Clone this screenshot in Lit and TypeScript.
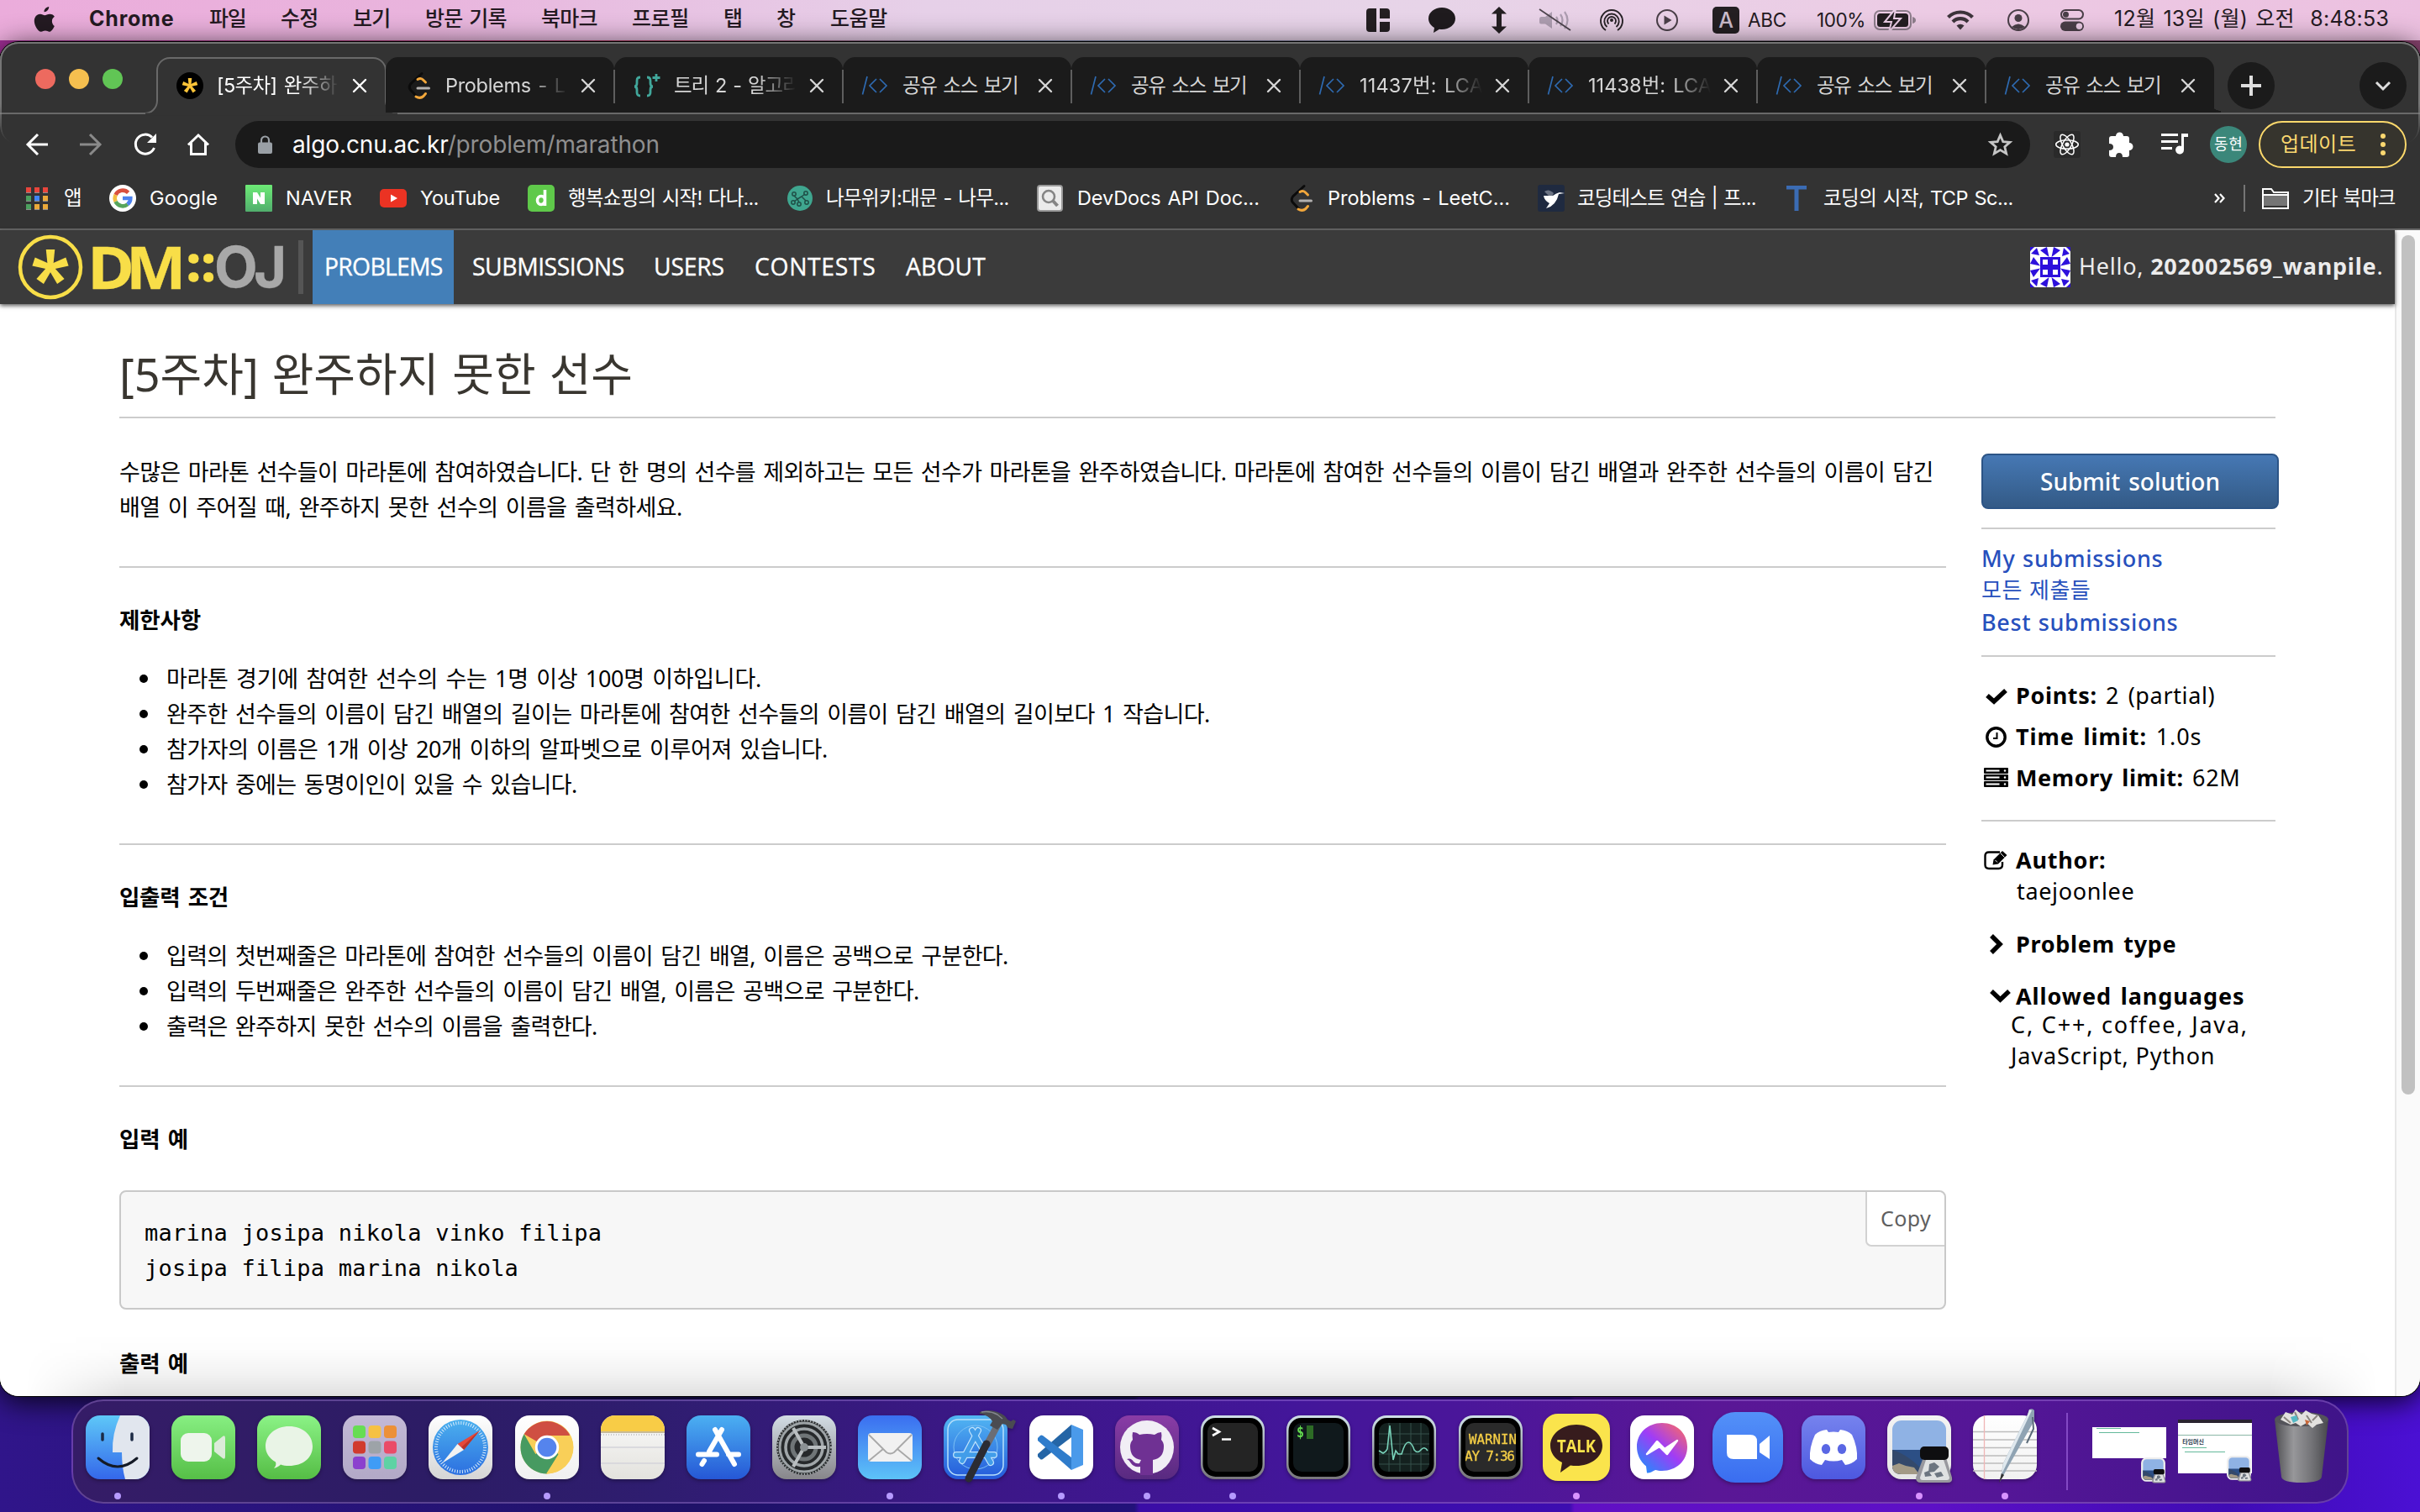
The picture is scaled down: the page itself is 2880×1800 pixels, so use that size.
import { LitElement, html, css, svg, TemplateResult } from "lit";
import { customElement, property } from "lit/decorators.js";
import { styleMap } from "lit/directives/style-map.js";

/* One line of text, tracked so that it fills the given width. */
@customElement("fit-line")
class FitLine extends LitElement {
  @property({ type: Number }) w = 0;
  static styles = css`
    :host { display: inline-block; white-space: pre; flex: none; }
  `;
  render() {
    return html`<slot></slot>`;
  }
  updated() {
    const n = (this.textContent || "").length;
    this.style.letterSpacing = "0px";
    const range = document.createRange();
    range.selectNodeContents(this);
    const natural = range.getBoundingClientRect().width;
    if (n > 1 && this.w) {
      this.style.letterSpacing = `${((this.w - natural) / (n - 0.5)).toFixed(3)}px`;
      this.style.width = `${this.w}px`;
    }
  }
}

interface Item { x: number; el: TemplateResult; }

/* Lays items in a row; each cell reaches to the start of the next one. */
const row = (items: Item[], from: number) => html`
  <div class="lead" style=${styleMap({ width: `${items[0].x - from}px` })}></div>
  ${items.map((it, i) => html`<div class="cell" style=${styleMap(
    i + 1 < items.length ? { width: `${items[i + 1].x - it.x}px` } : {}
  )}>${it.el}</div>`)}
`;
const rowCss = css`
  .lead, .cell { flex: none; }
  .cell { display: flex; align-items: center; }
  svg { display: block; flex: none; overflow: visible; }
`;

const line = (w: number, t: string, c = "") => html`<fit-line class=${c} .w=${w}>${t}</fit-line>`;

/* ---------- menu bar ---------- */
const menuIcons = {
  apple: html`<svg width="28" height="32" viewBox="0 0 28 32" fill="#241a22"><path d="M19.2 0c.3 3-2.600 6.300-5.700 6.200C13.200 3.300 16.200.2 19.200 0zM25.800 22.900c-1 2.400-3.400 6.800-6 6.900-1.900 0-2.600-1.200-4.900-1.200s-3.100 1.200-4.900 1.200C6.200 30 1.800 22.500 1.800 17.100c0-5.600 3.700-8.300 6.900-8.300 2.300 0 4.200 1.500 5.600 1.500 1.300 0 3.600-1.700 6.500-1.500 1.200.1 3.600.5 5.100 2.900-4.300 2.600-3.600 8.900-.1 11.200z"/></svg>`,
  split: html`<svg width="28" height="28" viewBox="0 0 28 28" fill="#241f22"><path d="M4 0h8v28H4a4 4 0 0 1-4-4V4a4 4 0 0 1 4-4zM16 0h8a4 4 0 0 1 4 4v8H16zM16 16h12v8a4 4 0 0 1-4 4h-8z"/></svg>`,
  bubble: html`<svg width="32" height="32" viewBox="0 0 32 32" fill="#1f1b1e"><path d="M16 1c8.800 0 16 5.600 16 13s-7 13-16 13c-1 0-2 0-3-.2L6 31l1-6C2.500 22.500 0 18.500 0 14 0 6.600 7.200 1 16 1z"/></svg>`,
  arrows: html`<svg width="18" height="32" viewBox="0 0 18 32" fill="#241f22"><path d="M9 0l9 8.500h-6v15h6L9 32l-9-8.500h6v-15H0z"/></svg>`,
  mute: html`<svg width="38" height="28" viewBox="0 0 38 28" fill="none"><path d="M2 10h5l8-6v20l-8-5.500H2q-2 0-2-2v-4q0-2.500 2-2.500z" fill="#ad9db0"/><path d="M20 10q3 4 0 9M25 7q5 7 0 14M30 4q7 10 0 20" stroke="#ad9db0" stroke-width="2.200"/><path d="M0 1l37 25" stroke="#4d444d" stroke-width="1.800"/></svg>`,
  airdrop: html`<svg width="28" height="28" viewBox="0 0 28 28" fill="none" stroke="#282327" stroke-width="1.900"><circle cx="14" cy="14" r="2" fill="#282327" stroke="none"/><path d="M10.500 18.500a5 5 0 1 1 7 0M8.500 22a8.700 8.700 0 1 1 11 0M7 26a13 13 0 1 1 14 0"/></svg>`,
  play: html`<svg width="26" height="26" viewBox="0 0 26 26"><circle cx="13" cy="13" r="12" fill="none" stroke="#4a3f48" stroke-width="2"/><path d="M9.500 7.500l9 5.500-9 5.500z" fill="#4a3f48"/></svg>`,
  battery: html`<svg width="50" height="24" viewBox="0 0 50 24"><rect x="1" y="1" width="43" height="22" rx="6" fill="none" stroke="#8d7d8b" stroke-width="2"/><rect x="4" y="4" width="37" height="16" rx="3.500" fill="#241f22"/><path d="M46 8q4 1 4 4t-4 4z" fill="#8d7d8b"/><path d="M26 -2L13 14h8l-3 12 14-16h-8z" fill="#241f22" stroke="#eacde5" stroke-width="2"/></svg>`,
  wifi: html`<svg width="32" height="24" viewBox="0 0 32 24" fill="none" stroke="#3d343b" stroke-width="4.200"><path d="M1.500 8.500a20.500 20.500 0 0 1 29 0M7 14a12.500 12.500 0 0 1 18 0"/><path d="M11.500 18.500a6.500 6.500 0 0 1 9 0L16 23.500z" fill="#3d343b" stroke="none"/></svg>`,
  user: html`<svg width="26" height="26" viewBox="0 0 26 26"><circle cx="13" cy="13" r="12" fill="none" stroke="#4a3f48" stroke-width="2"/><circle cx="13" cy="10.500" r="4.500" fill="#4a3f48"/><path d="M5 21q8-7 16 0-8 6-16 0z" fill="#4a3f48"/></svg>`,
  toggle: html`<svg width="28" height="26" viewBox="0 0 28 26"><rect x="1" y="1" width="26" height="10.500" rx="5.200" fill="none" stroke="#4a3f48" stroke-width="2"/><circle cx="6.500" cy="6.200" r="3.500" fill="#4a3f48"/><rect y="14.500" width="28" height="11.500" rx="5.700" fill="#4a3f48"/><circle cx="22.500" cy="20.200" r="3.700" fill="#eacbe4"/></svg>`,
};

@customElement("menu-bar")
class MenuBar extends LitElement {
  static styles = [rowCss, css`
    :host {
      display: flex; height: 48px; align-items: center; color: #241a22; word-spacing: 2px;
      font: 500 25px/45px Inter, "Noto Sans CJK KR", sans-serif;
      background: linear-gradient(90deg, #ebacdb 0, #e9b4dd 500px, #e6d0e8 1100px, #e7d4e8 1700px, #eccbe4 2300px, #ecc0e0 100%);
    }
    .cell { height: 48px; }
    fit-line { height: 48px; }
    .b { font-weight: 700; }
    .r { font-weight: 400; word-spacing: 2px; }
    .small { font-size: 22.500px; font-weight: 400; line-height: 48px; }
    .abc { width: 32px; height: 32px; border-radius: 5px; background: #241f22; color: #cbbccb; font: 500 25px/32px Inter, sans-serif; text-align: center; }
  `];
  render() {
    const m = menuIcons;
    return row([
      { x: 39, el: m.apple },
      { x: 106, el: line(101, "Chrome", "b") },
      { x: 249, el: line(44, "파일") },
      { x: 334, el: line(45, "수정") },
      { x: 420, el: line(45, "보기") },
      { x: 506, el: line(97, "방문 기록") },
      { x: 644, el: line(67, "북마크") },
      { x: 752, el: line(68, "프로필") },
      { x: 861, el: line(22, "탭") },
      { x: 924, el: line(22, "창") },
      { x: 988, el: line(68, "도움말") },
      { x: 1626, el: m.split },
      { x: 1700, el: m.bubble },
      { x: 1775, el: m.arrows },
      { x: 1832, el: m.mute },
      { x: 1904, el: m.airdrop },
      { x: 1971, el: m.play },
      { x: 2038, el: html`<div class="abc">A</div>` },
      { x: 2080, el: line(46, "ABC", "small") },
      { x: 2162, el: line(58, "100%", "small") },
      { x: 2230, el: m.battery },
      { x: 2317, el: m.wifi },
      { x: 2389, el: m.user },
      { x: 2452, el: m.toggle },
      { x: 2516, el: line(327, "12월 13일 (월) 오전  8:48:53", "r") },
    ], 0);
  }
}

/* ---------- tabs ---------- */
/* Five-armed asterisk; the arms widen towards their tips. */
const asterisk = (color: string, r: number) => svg`<g fill=${color}>
  ${[0, 72, 144, 216, 288].map((a) => svg`<path d=${`M${-r * 0.15} 0L${-r * 0.25} ${-r}H${r * 0.25}L${r * 0.15} 0Z`} transform=${`rotate(${a})`}/>`)}</g>`;

const leet = html`<svg width="26" height="32" viewBox="0 0 26 32" fill="none" stroke-linecap="round"><path d="M16 1.500L2.500 14q-2.500 4 0 7l7.500 8" stroke="#0b0b0b" stroke-width="3"/><path d="M11 8.500q4-2.500 7 1l2.500 2.500M9 29q5 3 9-.5l2.500-3" stroke="#f2a73b" stroke-width="3"/><path d="M11 19h13.500" stroke="#b3b1b0" stroke-width="3"/></svg>`;
const code = html`<svg width="30" height="22" viewBox="0 0 30 22" fill="none" stroke="#2e6ab1" stroke-width="1.700"><path d="M6 0L.5 21.500M17 3l-8 8 8 8M21 3l8 8-8 8"/></svg>`;
const favicons: Record<string, TemplateResult> = {
  dmoj: html`<svg width="32" height="32" viewBox="-16 -16 32 32"><circle r="16" fill="#000"/>${asterisk("#fcc438", 9)}</svg>`,
  leet: html`<svg width="4" height="1"></svg>${leet}`,
  tree: html`<svg width="32" height="32" viewBox="0 0 32 32" fill="none" stroke="#41a79b" stroke-width="2.800"><path d="M8 6Q4 6 4 10v3q0 4-3 4 3 0 3 4v3q0 4 4 4M16 6q4 0 4 4v3q0 4 3 4-3 0-3 4v3q0 4-4 4M27 2v9M22.500 6.500h9"/></svg>`,
  code,
};
const cross = html`<svg class="x" width="16" height="16" viewBox="0 0 16 16" fill="none" stroke="currentColor" stroke-width="2.400" stroke-linecap="round"><path d="M1 1l14 14M15 1L1 15"/></svg>`;

@customElement("tab-strip")
class TabStrip extends LitElement {
  static styles = css`
    :host { display: flex; height: 84px; border-bottom: 2px solid #696969; background: #333; color: #d6d6d6; font: 400 23.500px/32px Inter, "Noto Sans CJK KR", sans-serif; box-sizing: content-box; word-spacing: 2.500px; }
    svg { display: block; flex: none; overflow: visible; }
    .lights { display: flex; gap: 16px; width: 145px; padding: 32px 0 0 42px; flex: none; }
    .light { width: 24px; height: 24px; border-radius: 50%; flex: none; }
    .tab { position: relative; display: flex; align-items: center; width: 272px; height: 66px; margin-top: 18px; box-sizing: border-box; padding: 2px 0 0 23px; flex: none; background: #1b1b1b; border-radius: 15px 15px 0 0; }
    .tab.active { background: none; color: #fff; }
    .tab.line::before { content: ""; position: absolute; left: -1px; top: 15px; width: 2px; height: 40px; background: #5e5e5e; }
    .outline { position: absolute; left: -16px; top: 0; }
    .icon { width: 48px; flex: none; position: relative; display: flex; }
    .title { position: relative; width: 150px; white-space: pre; flex: none; height: 32px; }
    .fade { mask-image: linear-gradient(90deg, #000 98px, transparent 146px); }
    .x { position: relative; margin-left: 12px; }
    .flare { width: 8px; height: 16px; align-self: flex-end; background: radial-gradient(circle 14px at 100% 0, transparent 97%, #1b1b1b); flex: none; }
    .round { width: 56px; height: 56px; border-radius: 50%; background: #1b1b1b; display: flex; align-items: center; justify-content: center; margin-top: 24px; color: #dedede; flex: none; }
    .plus { margin-left: 8px; }
    .down { margin-left: auto; margin-right: 16px; }
  `;
  render() {
    const tabs: [string, string, number][] = [
      ["dmoj", "[5주차] 완주하", 143], ["leet", "Problems - L", 143], ["tree", "트리 2 - 알고리", 150],
      ["code", "공유 소스 보기", 138], ["code", "공유 소스 보기", 138], ["code", "11437번: LCA", 147],
      ["code", "11438번: LCA", 147], ["code", "공유 소스 보기", 138], ["code", "공유 소스 보기", 138],
    ];
    return html`
      <div class="lights">${["#ed6a5f", "#f5bf4f", "#61c555"].map((c) => html`<div class="light" style=${styleMap({ background: c })}></div>`)}</div>
      ${tabs.map(([icon, text, w], i) => html`
        <div class="tab ${i === 0 ? "active" : ""} ${i > 1 ? "line" : ""}">
          ${i === 0 ? html`<svg class="outline" width="304" height="68" viewBox="0 0 304 68"><path d="M0 67A15 15 0 0 0 16 52V16A15 15 0 0 1 31 1H273A15 15 0 0 1 288 16V52A15 15 0 0 0 304 67" fill="#333" stroke="#696969" stroke-width="2"/><path d="M2 68h300" stroke="#333" stroke-width="3"/></svg>` : ""}
          <div class="icon">${favicons[icon]}</div>
          <div class="title ${w === 138 ? "" : "fade"}">${line(w, text)}</div>
          ${cross}
        </div>`)}
      <div class="flare"></div>
      <div class="round plus"><svg width="24" height="24" viewBox="0 0 24 24" stroke="currentColor" stroke-width="4"><path d="M12 0v24M0 12h24"/></svg></div>
      <div class="round down"><svg width="18" height="10" viewBox="0 0 18 10" fill="none" stroke="currentColor" stroke-width="3"><path d="M1 1l8 8 8-8"/></svg></div>
    `;
  }
}

/* ---------- address bar ---------- */
@customElement("address-bar")
class AddressBar extends LitElement {
  static styles = [rowCss, css`
    :host { display: flex; height: 72px; background: #333; align-items: center; font: 400 28px/56px Inter, "Noto Sans CJK KR", sans-serif; }
    .omni { display: flex; align-items: center; width: 2136px; height: 56px; border-radius: 28px; background: #1a1a1a; color: #fff; box-sizing: border-box; padding: 0 21px 0 27px; }
    .lock { margin-right: 24px; }
    .dim { color: #8f8f8f; }
    .star { margin-left: auto; }
    .react { width: 32px; height: 32px; border-radius: 3px; background: #2a2a2a; display: flex; align-items: center; justify-content: center; }
    .me { width: 44px; height: 44px; border-radius: 50%; background: #3b877a; color: #fff; font-size: 18px; line-height: 44px; display: flex; justify-content: center; }
    .update { display: flex; align-items: center; width: 176px; height: 56px; border-radius: 28px; border: 2px solid #fbd86b; box-sizing: border-box; background: #36342d; color: #fbd870; font-size: 24px; line-height: 52px; padding-left: 24px; }
    .update svg { margin-left: 29px; }
  `];
  render() {
    return row([
      { x: 31, el: html`<svg width="26" height="26" viewBox="0 0 26 26" fill="none" stroke="#fff" stroke-width="3"><path d="M26 13H2M14 1L2 13l12 12"/></svg>` },
      { x: 95, el: html`<svg width="26" height="26" viewBox="0 0 26 26" fill="none" stroke="#8a8a8a" stroke-width="3"><path d="M0 13h24M12 1l12 12-12 12"/></svg>` },
      { x: 159, el: html`<svg width="28" height="26" viewBox="0 0 28 26" fill="none"><path d="M22 4.500A11.500 11.500 0 1 0 24.500 17" stroke="#fff" stroke-width="3"/><path d="M27 0v11H16z" fill="#fff"/></svg>` },
      { x: 223, el: html`<svg width="26" height="26" viewBox="0 0 26 26" fill="none" stroke="#fff" stroke-width="3"><path d="M1 13.500L13 2l12 11.500M4.500 11v13.500h17V11"/></svg>` },
      { x: 280, el: html`<div class="omni">
        <svg class="lock" width="17" height="21" viewBox="0 0 17 21"><rect y="7.500" width="17" height="13.500" rx="2" fill="#9aa0a6"/><path d="M4 9V5a4.500 4.500 0 0 1 9 0v4" fill="none" stroke="#9aa0a6" stroke-width="2.200"/></svg>
        <fit-line .w=${437}>algo.cnu.ac.kr<span class="dim">/problem/marathon</span></fit-line>
        <svg class="star" width="29" height="28" viewBox="0 0 29 28" fill="none" stroke="#c6c6c6" stroke-width="2.800"><path d="M14.500 3l3.300 7.600 8.200.7-6.200 5.500 1.900 8.100-7.200-4.300-7.200 4.300 1.900-8.100L3 11.300l8.200-.7z"/></svg>
      </div>` },
      { x: 2444, el: html`<div class="react"><svg width="28" height="28" viewBox="-14 -14 28 28" fill="none" stroke="#fff" stroke-width="1.500"><circle r="2.600" fill="#fff" stroke="none"/>${[0, 60, 120].map((a) => svg`<ellipse rx="13.300" ry="5.200" transform=${`rotate(${a})`}/>`)}</svg></div>` },
      { x: 2510, el: html`<svg width="29" height="29" viewBox="0 0 29 29" fill="#fff"><path d="M8 4a4.500 4.500 0 0 1 9 0h4q3 0 3 3v5a4.500 4.500 0 0 1 0 9v5q0 3-3 3h-5q0-5-4-5t-4 5H3q-3 0-3-3v-5q5 0 5-4t-5-4V7q0-3 3-3z"/></svg>` },
      { x: 2572, el: html`<svg width="32" height="26" viewBox="0 0 32 26" fill="#fff"><path d="M0 0h20v3H0zM0 8h20v3H0zM0 16h13v3H0zM24 0h8v4h-5v15.500a5 5 0 1 1-3-4.500z"/></svg>` },
      { x: 2630, el: html`<div class="me">${line(34, "동현")}</div>` },
      { x: 2688, el: html`<div class="update">${line(90, "업데이트")}<svg width="6" height="26" viewBox="0 0 6 26" fill="#fbd870"><circle cx="3" cy="3" r="3"/><circle cx="3" cy="13" r="3"/><circle cx="3" cy="23" r="3"/></svg></div>` },
    ], 0);
  }
}

/* ---------- bookmarks ---------- */
const bm = {
  apps: html`<svg width="26" height="27" viewBox="0 0 26 27">${["#e8453c", "#e8453c", "#e8453c", "#4c9f5e", "#4285f4", "#eaa93a", "#4c9f5e", "#eaa93a", "#eaa93a"].map((c, i) => svg`<rect x=${(i % 3) * 10} y=${Math.floor(i / 3) * 10} width="6" height="7" fill="#8d8d8d"/><rect x=${(i % 3) * 10} y=${Math.floor(i / 3) * 10} width="6" height="6" fill=${c}/>`)}</svg>`,
  google: html`<svg width="32" height="32" viewBox="-16 -16 32 32" fill="none" stroke-width="4.600"><circle r="16" fill="#fff"/><path d="M6.600-6.600A9.300 9.300 0 0 0-8.400-4" stroke="#d9503f"/><path d="M-8.400-4a9.300 9.300 0 0 0 0 8" stroke="#f3bd42"/><path d="M-8.400 4A9.300 9.300 0 0 0 5.800 7.300" stroke="#58a55c"/><path d="M5.800 7.300A9.300 9.300 0 0 0 9.300 0H0" stroke="#4c82ee"/></svg>`,
  naver: html`<svg width="32" height="32" viewBox="0 0 32 32"><defs><linearGradient id="nv" x2="0" y2="1"><stop stop-color="#6dea76"/><stop offset="1" stop-color="#51ae6d"/></linearGradient></defs><rect width="32" height="32" rx="1" fill="url(#nv)"/><path d="M9 9h5l4 6.500V9h5v14h-5l-4-6.500V23H9z" fill="#fff"/></svg>`,
  youtube: html`<svg width="32" height="32" viewBox="0 0 32 32"><rect y="5" width="32" height="22" rx="5" fill="#eb3323"/><path d="M13 11.500l8 4.500-8 4.500z" fill="#fff"/></svg>`,
  danawa: html`<svg width="32" height="32" viewBox="0 0 32 32"><rect width="32" height="32" rx="5" fill="#5fc94a"/><path d="M20.500 6v19M20.500 18.500a4.500 5 0 1 1-9 0 4.500 5 0 0 1 9 0z" fill="none" stroke="#fff" stroke-width="3.600"/></svg>`,
  namu: html`<svg width="30" height="30" viewBox="0 0 30 30" fill="none" stroke="#1f4f47" stroke-width="1.500"><circle cx="15" cy="15" r="15" fill="#3fa68f" stroke="none"/><circle cx="8" cy="10" r="2.200"/><circle cx="7" cy="20" r="2.200"/><circle cx="14" cy="22" r="2.200"/><circle cx="22" cy="9" r="2.200"/><circle cx="23" cy="20" r="2.200"/><path d="M8 12l4 4-4 3M12 16l2 4M12 16l5-3 4-3M17 13l5 5"/></svg>`,
  devdocs: html`<svg width="31" height="32" viewBox="0 0 31 32"><rect x="1" y="1" width="29" height="30" rx="3" fill="#ebebeb" stroke="#9b9b9b" stroke-width="2"/><circle cx="14" cy="14" r="7" fill="none" stroke="#858585" stroke-width="2.600"/><path d="M19 19l5.500 6" stroke="#858585" stroke-width="4"/></svg>`,
  bird: html`<svg width="32" height="32" viewBox="0 0 32 32"><rect width="32" height="32" rx="3" fill="#1f2a40"/><path d="M8 8q5-4 11 2l-3 6z" fill="#6c7484"/><path d="M32 10l-6-1q-4 1-8 4l-11 0q1 6 7 9l-4 6q12-3 15-17z" fill="#fff"/></svg>`,
  tee: html`<svg width="24" height="30" viewBox="0 0 24 30"><path d="M0 0h24v4.500h-9.500V30h-5V4.500H0z" fill="#3b6cb4"/></svg>`,
  folder: html`<svg width="32" height="25" viewBox="0 0 32 25"><path d="M1 1h10l3 4h17v19H1z" fill="#333" stroke="#fff" stroke-width="2"/><rect x="2" y="9" width="28" height="12" fill="#757575"/><path d="M1 8h30" stroke="#fff" stroke-width="2"/></svg>`,
};

@customElement("bookmark-bar")
class BookmarkBar extends LitElement {
  static styles = [rowCss, css`
    :host { display: flex; height: 64px; background: #333; border-bottom: 2px solid #696969; color: #fff; align-items: center; font: 400 23.500px/32px Inter, "Noto Sans CJK KR", sans-serif; word-spacing: 1.500px; }
    .cell { height: 32px; margin-top: -8px; }
    .sep { width: 2px; height: 32px; background: #757575; }
  `];
  render() {
    return row([
      { x: 31, el: bm.apps }, { x: 76, el: line(20, "앱") },
      { x: 130, el: bm.google }, { x: 178, el: line(81, "Google") },
      { x: 292, el: bm.naver }, { x: 340, el: line(79, "NAVER") },
      { x: 452, el: bm.youtube }, { x: 500, el: line(95, "YouTube") },
      { x: 628, el: bm.danawa }, { x: 676, el: line(227, "행복쇼핑의 시작! 다나...") },
      { x: 937, el: bm.namu }, { x: 983, el: line(218, "나무위키:대문 - 나무...") },
      { x: 1234, el: bm.devdocs }, { x: 1282, el: line(217, "DevDocs API Doc...") },
      { x: 1536, el: leet }, { x: 1580, el: line(217, "Problems - LeetC...") },
      { x: 1830, el: bm.bird }, { x: 1877, el: line(213, "코딩테스트 연습 | 프...") },
      { x: 2126, el: bm.tee }, { x: 2170, el: line(226, "코딩의 시작, TCP Sc...") },
      { x: 2635, el: html`<svg width="13" height="12" viewBox="0 0 13 12" fill="none" stroke="#fff" stroke-width="2.200"><path d="M1 1l4.500 5L1 11M7 1l4.500 5L7 11"/></svg>` },
      { x: 2670, el: html`<div class="sep"></div>` },
      { x: 2692, el: bm.folder }, { x: 2740, el: line(111, "기타 북마크") },
    ], 0);
  }
}

/* ---------- site header ---------- */
const identicon = html`<svg width="48" height="48" viewBox="-24 -24 48 48" fill="#2d10dc"><rect x="-24" y="-24" width="48" height="48" rx="6" fill="#fff"/>
  <rect x="-12" y="-12" width="24" height="24"/><path d="M-9-9h6v6h-6zM3-9h6v6h-6zM-9 3h6v6h-6zM3 3h6v6h-6z" fill="#fff"/>
  ${[0, 90, 180, 270].map((a) => svg`<path transform=${`rotate(${a})`} d="M-12-20L-4-24-1.500-12zM12-20L4-24 1.500-12zM-23-16L-16-23-13-14zM-24-24h5l-5 5z"/>`)}</svg>`;

@customElement("site-header")
class SiteHeader extends LitElement {
  static styles = [rowCss, css`
    :host { display: flex; height: 88px; align-items: center; background: #3b3b3b; color: #fff; font: 500 28.300px/87px "Open Sans", sans-serif; -webkit-text-stroke: .35px; box-shadow: 0 2px 5px rgba(0, 0, 0, .65); position: relative; }
    .cell { height: 88px; }
    fit-line { height: 88px; }
    .dm, .oj { font: 700 69px/86px "Open Sans", sans-serif; color: #f8de48; height: 88px; }
    .dm { transform: scaleX(1.1); transform-origin: 0 0; }
    .oj { color: #a8a8a8; font: 700 67px/87px Inter, sans-serif; }
    .colons { font: 800 58px/77px "Open Sans", sans-serif; color: #f8de48; height: 88px; }
    .rule { width: 6px; height: 64px; background: #555; }
    .active { display: flex; width: 168px; height: 88px; background: #437fb8; padding-left: 14px; box-sizing: border-box; }
    .hello { font-family: "Noto Sans", sans-serif; font-weight: 400; font-size: 27px; line-height: 85px; color: #ececec; height: 88px; -webkit-text-stroke: 0; }
    b { font-weight: 700; }
  `];
  render() {
    return row([
      { x: 21, el: html`<svg width="78" height="78" viewBox="-39 -39 78 78"><circle r="36" fill="none" stroke="#f8de48" stroke-width="4.500"/>${asterisk("#f8de48", 21)}</svg>` },
      { x: 104, el: line(114, "DM", "dm") },
      { x: 222, el: line(35, "::", "colons") },
      { x: 255, el: line(84, "OJ", "oj") },
      { x: 355, el: html`<div class="rule"></div>` },
      { x: 372, el: html`<div class="active">${line(141, "PROBLEMS")}</div>` },
      { x: 562, el: line(181, "SUBMISSIONS") },
      { x: 778, el: line(84, "USERS") },
      { x: 898, el: line(144, "CONTESTS") },
      { x: 1078, el: line(95, "ABOUT") },
      { x: 2416, el: identicon },
      { x: 2474, el: html`<fit-line class="hello" .w=${362}>Hello, <b>202002569_wanpile</b>.</fit-line>` },
    ], 0);
  }
}

/* ---------- problem page ---------- */
const side = {
  check: html`<svg width="26" height="19" viewBox="0 0 26 19"><path d="M2 9l8 7L24 3" fill="none" stroke="#000" stroke-width="5.500"/></svg>`,
  clock: html`<svg width="25" height="25" viewBox="0 0 25 25" fill="none" stroke="#000"><circle cx="12.500" cy="12.500" r="10.700" stroke-width="3.400"/><path d="M13.500 7v7H9" stroke-width="2"/></svg>`,
  server: html`<svg width="29" height="23" viewBox="0 0 29 23">${[0, 8, 16].map((y) => svg`<rect y=${y} width="29" height="7" rx="1"/><rect x="2.500" y=${y + 2.5} width="16" height="2" fill="#fff"/><circle cx="25" cy=${y + 3.5} r="1.200" fill="#fff"/>`)}</svg>`,
  edit: html`<svg width="29" height="24" viewBox="0 0 29 24" fill="none" stroke="#000"><path d="M19 2.500H6Q1.500 2.500 1.500 7v10.500Q1.500 22 6 22h11.500q4.500 0 4.500-4.500V14" stroke-width="2.400"/><path d="M10.500 17.500l1-6L22 1l5.500 5-10.500 10.500z" fill="#000" stroke="none"/><path d="M13.500 12l2.500 2.500M20 4l4.500 4.500" stroke="#fff" stroke-width="1"/></svg>`,
  right: html`<svg width="17" height="24" viewBox="0 0 17 24"><path d="M3 2l10 10L3 22" fill="none" stroke="#000" stroke-width="5.500"/></svg>`,
  down: html`<svg width="25" height="17" viewBox="0 0 25 17"><path d="M2 3l10.500 10L23 3" fill="none" stroke="#000" stroke-width="5.500"/></svg>`,
};

@customElement("problem-page")
class ProblemPage extends LitElement {
  static styles = css`
    :host { display: block; height: 1300px; box-sizing: border-box; padding: 34px 142px 0 142px; background: #fff; color: #000; overflow: hidden; font: 400 27px/42px "Noto Sans", "Noto Sans CJK KR", sans-serif; word-spacing: 2.800px; }
    svg { display: block; flex: none; overflow: visible; }
    .title { height: 100px; width: 2566px; line-height: 98px; font-size: 54px; color: #393630; border-bottom: 2px solid #ccc; word-spacing: 2px; box-sizing: content-box; }
    .cols { display: grid; grid-template-columns: 2174px 354px; column-gap: 42px; padding-top: 42px; }
    .main { display: flex; flex-direction: column; padding-top: 1px; }
    .hr { height: 2px; background: #ccc; margin: 49px 0 41px; }
    h4 { margin: 0; font-size: 26.500px; font-weight: 700; height: 42px; line-height: 42px; }
    ul { list-style: none; margin: 28px 0 0; padding: 0; }
    li { display: flex; align-items: center; height: 42px; }
    li::before { content: ""; width: 10px; height: 10px; border-radius: 50%; background: #000; margin: 0 22px 0 24px; }
    .code { display: flex; justify-content: space-between; height: 142px; box-sizing: border-box; border: 2px solid #c9c9c9; border-radius: 8px; background: #f7f7f7; margin: 40px 0 43px; padding: 28px 0 0 28px; font: 400 27px/42px "DejaVu Sans Mono", monospace; word-spacing: 0; }
    .code .src { display: flex; flex-direction: column; }
    .copy { width: 92px; height: 63px; margin-top: -28px; border-left: 2px solid #d2d2d2; border-bottom: 2px solid #d2d2d2; border-radius: 0 7px 0 7px; background: #fff; color: #5f5f5f; font: 400 25px/62px "Noto Sans", sans-serif; display: flex; justify-content: center; }
    aside { display: flex; flex-direction: column; }
    .submit { height: 66px; box-sizing: border-box; border: 2px solid #2c5486; border-radius: 8px; background: linear-gradient(#4678b4, #335a86); color: #fff; font-weight: 500; font-size: 28px; line-height: 62px; display: flex; justify-content: center; }
    .shr { height: 2px; width: 350px; background: #ccc; margin: 22px 0 16px; }
    .links { color: #2750bd; font-weight: 500; line-height: 38px; display: flex; flex-direction: column; word-spacing: 1px; margin-bottom: -2px; }
    .links fit-line { height: 38px; }
    .ko { font-size: 26px; line-height: 36px; font-weight: 400; }
    .info { display: flex; align-items: center; height: 48.700px; }
    .ico { width: 41px; flex: none; display: flex; padding-left: 3px; box-sizing: border-box; }
    .ico.c { padding-left: 5px; } .ico.r { padding-left: 9px; } .ico.d { padding-left: 10px; }
    .stats { margin-top: 6px; }
    .mid { margin-top: 26px; }
    .author { height: 37px; margin-top: 11px; }
    .type { height: 37px; margin-top: 26px; }
    .lang { height: 37px; margin-top: 25px; }
    .langs { line-height: 36.500px; display: flex; flex-direction: column; padding-left: 35px; margin-top: -2px; word-spacing: 0; }
    .langs fit-line { height: 36.500px; }
    .name { padding-left: 42px; line-height: 37px; }
    b { font-weight: 700; }
  `;
  render() {
    const li = (w: number, t: string) => html`<li>${line(w, t)}</li>`;
    const info = (cls: string, ic: string, icon: TemplateResult, w: number, b: string, t = "") =>
      html`<div class="info ${cls}"><span class="ico ${ic}">${icon}</span><fit-line .w=${w}><b>${b}</b>${t}</fit-line></div>`;
    return html`
      <div class="title">${line(611, "[5주차] 완주하지 못한 선수")}</div>
      <div class="cols">
        <div class="main">
          ${line(2159, "수많은 마라톤 선수들이 마라톤에 참여하였습니다. 단 한 명의 선수를 제외하고는 모든 선수가 마라톤을 완주하였습니다. 마라톤에 참여한 선수들의 이름이 담긴 배열과 완주한 선수들의 이름이 담긴")}
          ${line(670, "배열 이 주어질 때, 완주하지 못한 선수의 이름을 출력하세요.")}
          <div class="hr"></div>
          <h4>${line(97, "제한사항")}</h4>
          <ul>
            ${li(708, "마라톤 경기에 참여한 선수의 수는 1명 이상 100명 이하입니다.")}
            ${li(1242, "완주한 선수들의 이름이 담긴 배열의 길이는 마라톤에 참여한 선수들의 이름이 담긴 배열의 길이보다 1 작습니다.")}
            ${li(787, "참가자의 이름은 1개 이상 20개 이하의 알파벳으로 이루어져 있습니다.")}
            ${li(489, "참가자 중에는 동명이인이 있을 수 있습니다.")}
          </ul>
          <div class="hr"></div>
          <h4>${line(130, "입출력 조건")}</h4>
          <ul>
            ${li(1002, "입력의 첫번째줄은 마라톤에 참여한 선수들의 이름이 담긴 배열, 이름은 공백으로 구분한다.")}
            ${li(896, "입력의 두번째줄은 완주한 선수들의 이름이 담긴 배열, 이름은 공백으로 구분한다.")}
            ${li(513, "출력은 완주하지 못한 선수의 이름을 출력한다.")}
          </ul>
          <div class="hr"></div>
          <h4>${line(82, "입력 예")}</h4>
          <div class="code">
            <div class="src">
              ${line(544, "marina josipa nikola vinko filipa")}
              ${line(445, "josipa filipa marina nikola")}
            </div>
            <div class="copy">${line(60, "Copy")}</div>
          </div>
          <h4>${line(82, "출력 예")}</h4>
        </div>
        <aside>
          <div class="submit">${line(214, "Submit solution")}</div>
          <div class="shr"></div>
          <div class="links">
            ${line(216, "My submissions")}
            ${line(130, "모든 제출들", "ko")}
            ${line(234, "Best submissions")}
          </div>
          <div class="shr"></div>
          ${info("stats", "c", side.check, 237, "Points:", " 2 (partial)")}
          ${info("", "c", side.clock, 221, "Time limit:", " 1.0s")}
          ${info("", "", side.server, 267, "Memory limit:", " 62M")}
          <div class="shr mid"></div>
          ${info("author", "", side.edit, 107, "Author:")}
          <div class="name">${line(140, "taejoonlee")}</div>
          ${info("type", "r", side.right, 191, "Problem type")}
          ${info("lang", "d", side.down, 272, "Allowed languages")}
          <div class="langs">
            ${line(282, "C, C++, coffee, Java,")}
            ${line(243, "JavaScript, Python")}
          </div>
        </aside>
      </div>
    `;
  }
}

/* ---------- dock ---------- */
const lg = (id: string, a: string, b: string) => svg`<linearGradient id=${id} x2="0" y2="1"><stop stop-color=${a}/><stop offset="1" stop-color=${b}/></linearGradient>`;
const app = (id: string, a: string, b: string, body: unknown) => html`<svg width="76" height="76" viewBox="0 0 76 76"><defs>${lg(id, a, b)}<clipPath id=${"c" + id}><rect width="76" height="76" rx="17"/></clipPath></defs><rect width="76" height="76" rx="17" fill=${`url(#${id})`}/>${body}</svg>`;
const term = (id: string, screen: string, body: unknown) => app(id, "#cfe0e8", "#77757a", svg`<rect x="2.500" y="3" width="71" height="70" rx="15" fill="#000"/><rect x="8" y="9" width="60" height="58" rx="10" fill=${screen}/>${body}`);

const finder = app("fi", "#5ec8f8", "#3467ea", svg`<path d="M41 0Q31 22 32 44H43Q43 62 47 76H76V0z" fill="#e1e6ee" clip-path="url(#cfi)"/><path d="M20 22v7M55 22v7" stroke="#1c2b45" stroke-width="3.500" stroke-linecap="round"/><path d="M15 51Q38 71 61 51" fill="none" stroke="#141a26" stroke-width="3" stroke-linecap="round"/>`);
const facetime = app("ft", "#87ef82", "#56bf47", svg`<rect x="11" y="21" width="37" height="34" rx="9" fill="#eef5ec"/><path d="M51 33L61 25q3-2 3 2v22q0 4-3 2L51 43z" fill="#dcebd9"/>`);
const messages = app("ms", "#8bf386", "#55bd45", svg`<path d="M38 13c16 0 28 10 28 24S54 60 38 60c-4 0-7-.5-10-1.500-2 2-5 4-8 4.500 2-2 3-5 2-7.500C14 51 10 44 10 37c0-14 12-24 28-24z" fill="#e9f4e6"/>`);
const launchpad = app("lp", "#c3b9d6", "#b2a9c7", svg`${["#66dd53", "#f6c143", "#ec9037", "#d13b2e", "#9da3a8", "#ea4b68", "#8b40ce", "#3f9cf6", "#5ed2a4"].map((c, i) => svg`<rect x=${12 + (i % 3) * 18.5} y=${12 + Math.floor(i / 3) * 18.5} width="15" height="15" rx="4" fill=${c}/>`)}`);
const safari = app("sf", "#fff", "#d5d5d5", svg`<defs>${lg("sfb", "#4bb0ee", "#2c6fe0")}</defs><circle cx="38" cy="38" r="33" fill="url(#sfb)"/><circle cx="38" cy="38" r="29" fill="none" stroke="#d9ecfb" stroke-width="4" stroke-dasharray="1 2.040"/><path d="M61 18L42 41 34.500 34z" fill="#e5483b"/><path d="M61 18L42 41 39 38z" fill="#b9342b"/><path d="M16 57L34.500 34 42 41z" fill="#f2f2f2"/>`);
const chrome = app("cr", "#fff", "#f0f0f0", svg`<circle cx="38" cy="38" r="31.500" fill="#f9cf58"/><path d="M38 38L10.700 22.200A31.500 31.500 0 0 1 65.300 23.500L64 24z" fill="#cf4f42"/><path d="M10.700 22.200A31.500 31.500 0 0 0 38 69.500L51.700 46 38 38l-13.700 8z" fill="#479a61"/><path d="M38 24h27.800A31.500 31.500 0 0 1 37 69.500L52 46z" fill="#f9cf58"/><circle cx="38" cy="38" r="14.200" fill="#fff"/><circle cx="38" cy="38" r="11.300" fill="#5584ed"/>`);
const notes = app("nt", "#fafafa", "#e3e2dd", svg`<path d="M0 0H76V19H0z" fill="#f8cc46" clip-path="url(#cnt)"/><path d="M0 20h76" stroke="#b9a77a" stroke-width="1.500"/><path d="M0 23h76" stroke="#c9c9c9" stroke-width="2" stroke-dasharray="1 2"/><path d="M0 38h76M0 57h76" stroke="#d4d4da" stroke-width="1.600"/>`);
const appstore = app("as", "#4bb0f2", "#2557d6", svg`<g stroke="#fff" stroke-width="6" stroke-linecap="round"><path d="M42 17L27 43M34 17L57 58M14 46.500H36M50 46.500H62M21 54L18.500 58"/></g>`);
const settings = app("st", "#d3dde5", "#87868a", svg`<circle cx="38" cy="38" r="33" fill="#26292b"/><circle cx="38" cy="38" r="29" fill="none" stroke="#9da3a6" stroke-width="3"/><circle cx="38" cy="38" r="32" fill="none" stroke="#a6abad" stroke-width="2" stroke-dasharray="1.500 2"/><circle cx="38" cy="38" r="22" fill="none" stroke="#a0a6a9" stroke-width="3.600"/><circle cx="38" cy="38" r="14" fill="none" stroke="#6f7577" stroke-width="5"/><path d="M38 38H64M38 38L25 15M38 38L25 61" stroke="#b9bec0" stroke-width="4"/><circle cx="38" cy="38" r="5" fill="#8b9194"/>`);
const mail = app("ml", "#3a6ef0", "#5dc3f8", svg`<rect x="12" y="21" width="53" height="34" rx="4" fill="#f1f1f1"/><path d="M13 23L34 44q4.500 3 9 0L64 23M13 54L30 40M64 54L47 40" fill="none" stroke="#a8a8a8" stroke-width="1.800"/>`);
const xcode = app("xc", "#52b7f3", "#2459da", svg`<rect x="5" y="5" width="66" height="66" rx="12" fill="none" stroke="#b8e0fb" stroke-width="1.500"/><circle cx="38" cy="38" r="26" fill="none" stroke="#7cc0f4" stroke-width="1"/><g fill="none" stroke="#bfe3fc" stroke-width="8" stroke-linecap="round"><path d="M41 18L22 54M34 18L56 56M15 47H60" /></g><g fill="none" stroke="#429de9" stroke-width="5.500" stroke-linecap="round"><path d="M41 18L22 54M34 18L56 56M15 47H60" /></g><path d="M65 10L51 36" stroke="#6b6d74" stroke-width="8"/><path d="M51 34L30 75" stroke="#2b2c33" stroke-width="9" stroke-linecap="round"/><path d="M43-4q10-4 21 0 9 3 12 9l4 2 3-2 3 2-4 9-5-1-3-4-4-1-6 7-9-5 3-5q-4-7-15-9z" fill="#4a4b51"/><path d="M45-4q10-2 19 3l6 5" stroke="#84878e" stroke-width="1.500" fill="none"/>`);
const vscode = app("vs", "#fff", "#fff", svg`<path d="M50 11L50 26 16 52q-2 1-3 0l-3-3v-3z" fill="#2465a6"/><path d="M50 65L50 50 16 24q-2-1-3 0l-3 3v3z" fill="#2f7ccb"/><path d="M50 11L64 17V59L50 65z" fill="#4a9aea"/>`);
const github = app("gh", "#8a3ca6", "#582a80", svg`<circle cx="38" cy="38" r="32" fill="#f1eef5"/><path d="M30 71V61q-8 1-11-4-2-4-5-5 5-2 8 3 3 3 7 2L31 53Q18 51 18 37q0-5 3-8-1-5 0-9 5 0 8 3 9-2 18 0 4-3 8-3 1 4 0 9 3 3 3 8Q58 51 45 53V71z" fill="#6f3193"/>`);
const terminal = term("t1", "#242424", svg`<path d="M14 15l8 4.500-8 4.500" fill="none" stroke="#fff" stroke-width="2.600"/><path d="M25 28.500h11" stroke="#fff" stroke-width="2.500"/>`);
const iterm = term("t2", "#10191c", svg`<text x="12" y="26" font-family="DejaVu Sans Mono" font-size="17" font-weight="700" fill="#62d84e" textLength="9" lengthAdjust="spacingAndGlyphs">$</text><rect x="24" y="12" width="8" height="16" fill="#2d6b25"/>`);
const activity = term("t3", "#14211f", svg`<path d="M8 22h60M8 34h60M8 46h60M8 58h60M20 9v58M33 9v58M46 9v58M58 9v58" stroke="#35504b" stroke-width="1"/><path d="M8 42l5 3 3-2 2-3 3-28 4 41 3-11 3 4 4 0q4-14 8-14t7 9q4 5 8 0t8 1" fill="none" stroke="#79d3ba" stroke-width="1.600"/>`);
const consoleApp = term("t4", "#2a2a2a", svg`<defs><clipPath id="scr"><rect x="8" y="9" width="60" height="58" rx="8"/></clipPath></defs><g clip-path="url(#scr)" font-family="DejaVu Sans Mono" font-size="16" fill="#f5ce46" stroke="#f5ce46" stroke-width=".3"><text x="12" y="34" textLength="57" lengthAdjust="spacingAndGlyphs">WARNIN</text><text x="7" y="54" textLength="60" xml:space="preserve">AY 7:36</text></g>`);
const kakao = html`<svg width="80" height="80" viewBox="0 0 80 80"><rect width="80" height="80" rx="18" fill="#fae44c"/><path d="M40 13c17 0 31 11 31 25S57 62 40 62c-2 0-5 0-7-.5L21 70l2-12C14 54 9 46 9 38c0-14 14-25 31-25z" fill="#371c1d"/><text x="17" y="46" font-family="Open Sans" font-size="21" font-weight="700" fill="#fae44c" textLength="46" lengthAdjust="spacingAndGlyphs">TALK</text></svg>`;
const messenger = app("mg", "#fff", "#fff", svg`<defs><linearGradient id="mgb" x1="1" y1="0" x2="0.100" y2="1"><stop offset=".05" stop-color="#fb6a66"/><stop offset=".5" stop-color="#a03cf6"/><stop offset="1" stop-color="#1c8ffb"/></linearGradient></defs><path d="M38 9c17 0 30 12 30 28.500S55 66 38 66c-3 0-6-.5-8-1-4 2-7 4-10 3.500l-1-8C12 55 8 46 8 37.500 8 21 21 9 38 9z" fill="url(#mgb)"/><path d="M20 46l12-15 9 9 15-10-12 16-9-9z" fill="#fff" stroke="#fff" stroke-width="2.500" stroke-linejoin="round"/>`);
const zoom = html`<svg width="84" height="84" viewBox="0 0 84 84"><defs>${lg("zm", "#5391f8", "#3a6df0")}</defs><rect width="84" height="84" rx="27" fill="url(#zm)"/><path d="M17 27h28q8 0 8 8v21H25q-8 0-8-8z" fill="#fff"/><path d="M56 38l12-10v28L56 48z" fill="#fff"/></svg>`;
const discord = app("dc", "#7683ee", "#4d58e0", svg`<path d="M30 17l2 3q6-1 12 0l2-3q9 1 14 6 7 15 6 29-6 6-14 7l-4-6q-10 3-20 0l-4 6q-8-1-14-7-1-14 6-29 5-5 14-6z" fill="#fff"/><ellipse cx="29" cy="40" rx="5.200" ry="6" fill="#5a67e4"/><ellipse cx="48" cy="40" rx="5.200" ry="6" fill="#5a67e4"/>`);
const previewArt = svg`<rect x="6" y="6" width="64" height="64" rx="11" fill="#8fb2e4"/><path d="M6 41h64v18q0 11-11 11H17Q6 70 6 59z" fill="#2c4f85"/><path d="M6 41q10 3 20 10t20 19H17Q6 70 6 59z" fill="#34496b"/><path d="M6 60l8-3 8 3 10 2 6 8H17Q6 70 6 60z" fill="#a39a86"/><path d="M43 50L34 74q0 6 6 6h32q6 0 5-6L70 50z" fill="#98989e"/><path d="M46 53l-7 21q0 3 3 3h29q3 0 3-3L67 53z" fill="#dfe1e2"/><path d="M50 58l6-2 6 5-6 6-7 1zM44 68l5-2 4 6-8 1zM56 69l8-2 3 5-8 2z" fill="#6c7580"/><rect x="39" y="37" width="34" height="16" rx="5" fill="#0e0e10"/>`;
const preview = app("pv", "#f3f3f3", "#e6e6e6", previewArt);
const textedit = app("te", "#fff", "#f1f1f1", svg`<path d="M0 19.500h76M0 29h76M0 38.500h76M0 48h76M0 57h76M0 66h76" stroke="#bcbcbc" stroke-width="1.300"/><path d="M13.500 0v76" stroke="#f0b6b6" stroke-width="1.300"/><path d="M67-7q4-2 6 1L73 6 42 61 32 79l4-22 29-58z" fill="#8fa3b3"/><path d="M67-7l3 1L38 62l-4 8 2-13 29-58z" fill="#dfe8ee"/><path d="M31 80l3-11 3 2z" fill="#333"/><path d="M71 2l1 14-8 17" fill="none" stroke="#5a6a78" stroke-width="2"/>`);
const miniPreview = html`<svg class="mini" width="29" height="30" viewBox="0 0 76 79"><rect width="76" height="76" rx="17" fill="#eee"/>${previewArt}</svg>`;
const trash = html`<svg width="66" height="88" viewBox="0 0 66 88"><defs><linearGradient id="tr"><stop stop-color="#4e4e52"/><stop offset=".35" stop-color="#97979a"/><stop offset=".7" stop-color="#727276"/><stop offset="1" stop-color="#47474b"/></linearGradient></defs><ellipse cx="33" cy="12" rx="32" ry="9" fill="#54545a"/><path d="M1 12L9 80q1 7 24 7t24-7L65 12q-4 8-32 8T1 12z" fill="url(#tr)"/><path d="M8 12l6-9 8 3 4-6 7 6 5-5 7 4 8 2 6 9-8 2-5 4-7-6-7 4-6-4-6 2z" fill="#e3e1df"/><path d="M12 9l8 7M25 3l4 9M39 7l6 9M52 7l-6 6" stroke="#8a847f" stroke-width="2"/><path d="M20 9l7-2 2 6-6 3z" fill="#54b8c4"/><path d="M37 12l6 2-4 5z" fill="#c9683a"/></svg>`;

@customElement("app-dock")
class AppDock extends LitElement {
  static styles = css`
    :host { display: flex; position: relative; width: 2710px; height: 124px; box-sizing: border-box; border: 2px solid rgba(190, 150, 240, .32); border-radius: 38px; padding-left: 2px; background: linear-gradient(90deg, #351c67 0, #2c1c65 430px, #2f1d70 700px, #3c1788 1100px, #43169a 1450px, #4a169a 1650px, #5a1796 1950px, #541697 2300px, #3f1489 100%); }
    svg { display: block; flex: none; overflow: visible; }
    .slot { width: 102.100px; height: 120px; flex: none; display: grid; grid-template-rows: 108px 8px; justify-items: center; align-items: center; }
    .art { padding-top: 2px; filter: drop-shadow(0 2px 2px rgba(0, 0, 0, .3)); }
    .dot { width: 8px; height: 8px; border-radius: 50%; background: #b69aff; margin-top: 2px; }
    .dot.p { background: #d893ff; }
    .sep { width: 2px; height: 92px; background: #8349c4; margin: 14px 29px 0 22px; flex: none; }
    .win { position: relative; flex: none; width: 88px; background: #fff; box-sizing: border-box; margin-right: 14px; font: 700 7px/8px "Noto Sans CJK KR", sans-serif; }
    .w1 { height: 37px; margin-top: 31px; align-self: flex-start; }
    .w2 { height: 68px; margin-top: 22px; border-top: 4px solid #2a2330; margin-right: 26px; height: 64px; }
    .mini { position: absolute; right: 1px; bottom: -29px; }
    .w2 .mini { bottom: -9px; }
    .g { height: 1px; background: #63b99a; margin: 4px 0 0 8px; width: 48px; }
    .g.s { margin: 1px 0 0 5px; width: 29px; }
    .mark { border-top: 1px solid #8bb7a6; margin-top: 14px; padding: 3px 0 2px 5px; color: #2a3a4c; }
    .trash { margin-top: 10px; }
  `;
  render() {
    const apps: [TemplateResult, string][] = [
      [finder, "dot"], [facetime, ""], [messages, ""], [launchpad, ""], [safari, ""], [chrome, "dot"], [notes, ""],
      [appstore, ""], [settings, ""], [mail, "dot"], [xcode, ""], [vscode, "dot"], [github, "dot"], [terminal, "dot"],
      [iterm, ""], [activity, ""], [consoleApp, ""], [kakao, "dot p"], [messenger, ""], [zoom, ""], [discord, ""],
      [preview, "dot p"], [textedit, "dot p"],
    ];
    return html`
      ${apps.map(([art, dot]) => html`<div class="slot"><div class="art">${art}</div><div class=${dot}></div></div>`)}
      <div class="sep"></div>
      <div class="win w1"><div class="g s"></div><div class="g"></div>${miniPreview}</div>
      <div class="win w2"><div class="mark">타임머신</div><div class="g s"></div><div class="g"></div>${miniPreview}</div>
      <div class="trash">${trash}</div>
    `;
  }
}

/* ---------- desktop ---------- */
@customElement("app-root")
class AppRoot extends LitElement {
  static styles = css`
    :host { display: block; width: 2880px; height: 1800px; overflow: hidden; position: relative;
      background:
        linear-gradient(90deg, #a02f96 0, #b04060 800px, #7c88a8 1200px, #8d7c90 2100px, #8a4470 100%) 0 0 / 100% 120px no-repeat,
        linear-gradient(90deg, #30158a 0, #1f1268 820px, #22127a 1350px, #3b0da6 1356px, #3d0db0 1868px, #6110c4 1874px, #5d10c6 2300px, #3f0bb4 2650px, #4b10d4 100%); }
    .window { width: 2880px; height: 1612px; margin-top: 2px; border-radius: 22px; overflow: hidden; position: relative; background: #fff; box-shadow: 0 0 0 1px #000, 0 6px 34px rgba(0, 0, 0, .85); }
    .edge { position: absolute; inset: 0; border: 2px solid rgba(140, 140, 140, .75); border-bottom: none; border-radius: 22px; height: 120px; pointer-events: none; mask-image: linear-gradient(#000 60%, transparent); }
    .view { display: grid; grid-template-columns: 2850px 30px; height: 1388px; }
    .track { background: #fafafa; border-left: 2px solid #e7e7e7; box-sizing: border-box; padding: 6px 0 0 6px; }
    .thumb { width: 16px; height: 1023px; border-radius: 8px; background: #c1c1c1; }
    .haze { position: absolute; left: 0; right: 0; bottom: 0; height: 74px; background: linear-gradient(rgba(0, 0, 0, 0), rgba(0, 0, 0, .01) 30%, rgba(0, 0, 0, .05) 65%, rgba(0, 0, 0, .12)); mask-image: linear-gradient(90deg, transparent 30px, #000 150px, #000 2700px, transparent 2830px); }
    .dock { display: flex; justify-content: flex-start; padding: 4px 0 0 85px; position: relative; }
  `;
  render() {
    return html`
      <menu-bar></menu-bar>
      <div class="window">
        <tab-strip></tab-strip>
        <address-bar></address-bar>
        <bookmark-bar></bookmark-bar>
        <div class="view">
          <div><site-header></site-header><problem-page></problem-page></div>
          <div class="track"><div class="thumb"></div></div>
        </div>
        <div class="haze"></div>
        <div class="edge"></div>
      </div>
      <div class="dock"><app-dock></app-dock></div>
    `;
  }
}
